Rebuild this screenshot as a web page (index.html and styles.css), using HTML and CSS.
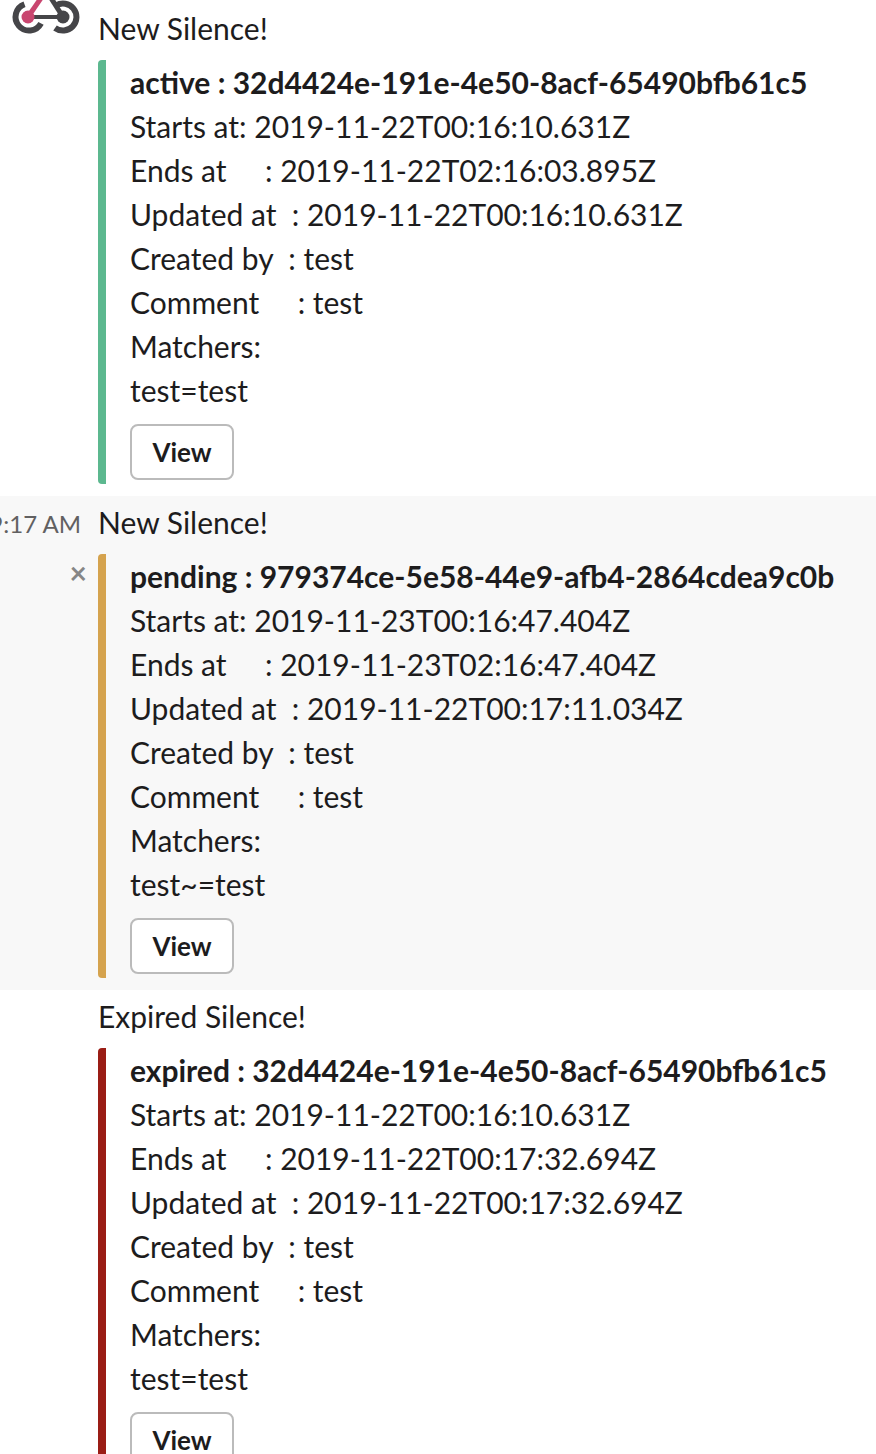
FILE: index.html
```html
<!DOCTYPE html>
<html lang="en">
<head>
    <meta charset="UTF-8">
    <meta name="viewport" content="width=device-width, initial-scale=1.0">
    <title>Silences</title>
    <link rel="stylesheet" href="styles.css">
</head>
<body>
    <div class="message">
        <div class="gutter">
            <svg class="avatar" width="90" height="40" viewBox="0 0 90 40" fill="none">
                <path d="M24.5 4.3 A13.5 13.5 0 1 0 41 23.3" stroke="#454548" stroke-width="6"/>
                <path d="M56 5.5 A13.5 13.5 0 1 1 55 28" stroke="#454548" stroke-width="6"/>
                <path d="M28 17 H63" stroke="#454548" stroke-width="4"/>
                <path d="M51 -2 L63 17" stroke="#454548" stroke-width="5"/>
                <circle cx="63" cy="17" r="6.5" fill="#454548"/>
                <path d="M28 17 L41 -2" stroke="#c9466f" stroke-width="5"/>
                <circle cx="28" cy="17" r="6.5" fill="#c9466f"/>
            </svg>
        </div>
        <div class="body">
            <div class="title">New Silence!</div>
            <div class="attachment active">
                <div class="line head">active : 32d4424e-191e-4e50-8acf-65490bfb61c5</div>
                <div class="line">Starts at: 2019-11-22T00:16:10.631Z</div>
                <div class="line">Ends at &nbsp; &nbsp; : 2019-11-22T02:16:03.895Z</div>
                <div class="line">Updated at &nbsp;: 2019-11-22T00:16:10.631Z</div>
                <div class="line">Created by &nbsp;: test</div>
                <div class="line">Comment &nbsp; &nbsp; : test</div>
                <div class="line">Matchers:</div>
                <div class="line">test=test</div>
                <button class="view">View</button>
            </div>
        </div>
    </div>

    <div class="message hover">
        <div class="gutter">
            <span class="time">9:17 AM</span>
            <span class="close">&times;</span>
        </div>
        <div class="body">
            <div class="title">New Silence!</div>
            <div class="attachment pending">
                <div class="line head">pending : 979374ce-5e58-44e9-afb4-2864cdea9c0b</div>
                <div class="line">Starts at: 2019-11-23T00:16:47.404Z</div>
                <div class="line">Ends at &nbsp; &nbsp; : 2019-11-23T02:16:47.404Z</div>
                <div class="line">Updated at &nbsp;: 2019-11-22T00:17:11.034Z</div>
                <div class="line">Created by &nbsp;: test</div>
                <div class="line">Comment &nbsp; &nbsp; : test</div>
                <div class="line">Matchers:</div>
                <div class="line">test~=test</div>
                <button class="view">View</button>
            </div>
        </div>
    </div>

    <div class="message">
        <div class="gutter"></div>
        <div class="body">
            <div class="title">Expired Silence!</div>
            <div class="attachment expired">
                <div class="line head">expired : 32d4424e-191e-4e50-8acf-65490bfb61c5</div>
                <div class="line">Starts at: 2019-11-22T00:16:10.631Z</div>
                <div class="line">Ends at &nbsp; &nbsp; : 2019-11-22T00:17:32.694Z</div>
                <div class="line">Updated at &nbsp;: 2019-11-22T00:17:32.694Z</div>
                <div class="line">Created by &nbsp;: test</div>
                <div class="line">Comment &nbsp; &nbsp; : test</div>
                <div class="line">Matchers:</div>
                <div class="line">test=test</div>
                <button class="view">View</button>
            </div>
        </div>
    </div>
</body>
</html>
```

FILE: styles.css
```css
html {
    height: 100%;
    overflow: hidden;
}
body {
    height: 100%;
    margin: 0;
    padding-top: 2px;
    box-sizing: border-box;
    overflow: hidden;
    background-color: #fff;
    color: #1d1c1d;
    font-family: Lato, sans-serif;
    font-size: 30px;
    line-height: 44px;
}
.message {
    display: flex;
    padding: 4px 0 12px;
}
.message.hover {
    background-color: #f8f8f8;
}
.gutter {
    position: relative;
    flex: 0 0 98px;
    min-width: 0;
    display: flex;
    flex-direction: column;
    align-items: flex-end;
    padding-right: 17px;
    box-sizing: border-box;
}
/* logo is cut off by the top of the window */
.avatar {
    position: absolute;
    left: 0;
    top: -6px;
}
.time {
    margin-top: 2px;
    color: #616061;
    font-size: 24px;
    white-space: nowrap;
}
.close {
    color: #868686;
    font-size: 30px;
    font-weight: 700;
    line-height: 30px;
    margin-top: 11px;
    margin-right: -6px;
}
.body {
    flex: 1;
    min-width: 0;
}
.title {
    margin-bottom: 10px;
}
.attachment {
    border-left: 8px solid;
    border-radius: 4px;
    padding: 0 0 4px 24px;
}
.attachment.active {
    border-color: #5cb88f;
}
.attachment.pending {
    border-color: #d5a34e;
}
.attachment.expired {
    border-color: #9a1d15;
}
.line {
    white-space: nowrap;
}
.head {
    font-weight: 700;
}
.view {
    display: block;
    width: 104px;
    height: 56px;
    margin-top: 12px;
    padding: 0;
    background-color: #fff;
    border: 2px solid #bbb;
    border-radius: 8px;
    color: #1d1c1d;
    font-family: Lato, sans-serif;
    font-size: 26px;
    font-weight: 700;
}
```
